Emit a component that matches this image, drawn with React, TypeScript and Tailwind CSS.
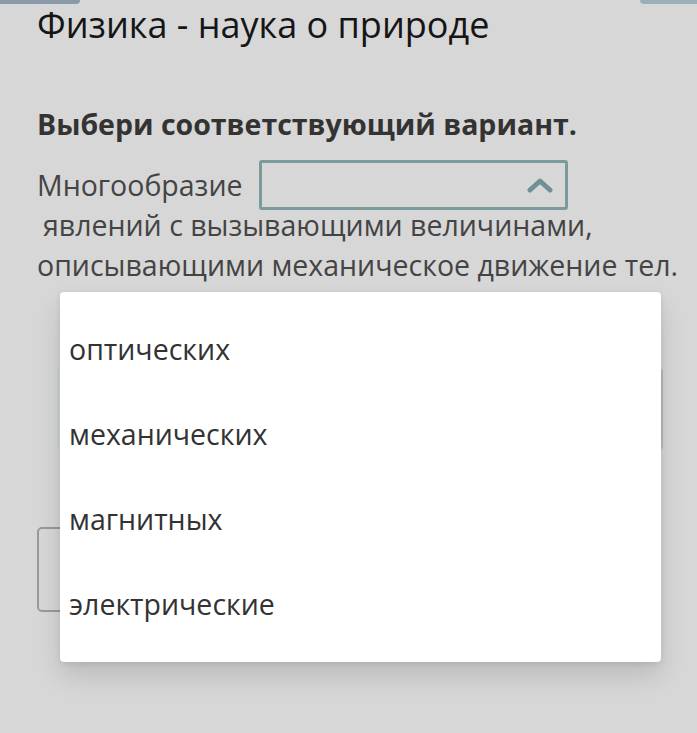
import React from "react";

export default function App() {
  const options = ["оптических", "механических", "магнитных", "электрические"];
  return (
    <div
      className="relative w-[697px] h-[733px] overflow-hidden bg-[#d7d7d7]"
      style={{ fontFamily: '"Open Sans", "Noto Sans", sans-serif' }}
    >
      <div className="flex justify-between">
        <div className="h-[4px] w-[80px] rounded-br-[4px] bg-[#8a9aa8]" />
        <div className="h-[4px] w-[57px] rounded-bl-[4px] bg-[#9ab0b8]" />
      </div>

      <div className="px-[37px]">
        <h1 className="text-[36px] leading-[41px] text-[#151515] whitespace-nowrap">
          Физика - наука о природе
        </h1>

        <h2 className="mt-[61px] text-[28.5px] leading-[36px] font-bold text-[#333333] whitespace-nowrap">
          Выбери соответствующий вариант.
        </h2>

        <div className="mt-[23px] text-[28.5px] leading-[40px] text-[#444444] whitespace-nowrap">
          <div className="flex h-[40px] items-center">
            <span>Многообразие</span>
            <div className="ml-[16px] flex h-[50px] w-[309px] items-center justify-end rounded-[3px] border-[3px] border-[#7b9a9c] pr-[12px]">
              <svg width="26" height="16" viewBox="0 0 26 16">
                <path
                  d="M3 13 L13 4 L23 13"
                  fill="none"
                  stroke="#6f9194"
                  strokeWidth="5"
                  strokeLinecap="round"
                  strokeLinejoin="round"
                />
              </svg>
            </div>
          </div>
          <div className="pl-[6px]">явлений с вызывающими величинами,</div>
          <div>описывающими механическое движение тел.</div>
        </div>

        <div className="mt-[83px] ml-[20px] h-[82px] w-[606px] rounded-[4px] border-x-[2px] border-l-[#c9d6d6] border-r-[#bcbcbc]" />

        <div className="mt-[77px] h-[85px] w-[60px] rounded-[5px] border-[2px] border-[#9a9a9a]" />
      </div>

      <div className="absolute left-[60px] top-[292px] flex h-[370px] w-[601px] flex-col rounded-[4px] bg-white py-[15px] shadow-[0_14px_26px_rgba(0,0,0,0.13),0_2px_6px_rgba(0,0,0,0.08)]">
        {options.map((o) => (
          <div
            key={o}
            className="flex h-[85px] items-center pl-[9px] text-[28.5px] text-[#333333]"
          >
            {o}
          </div>
        ))}
      </div>
    </div>
  );
}
